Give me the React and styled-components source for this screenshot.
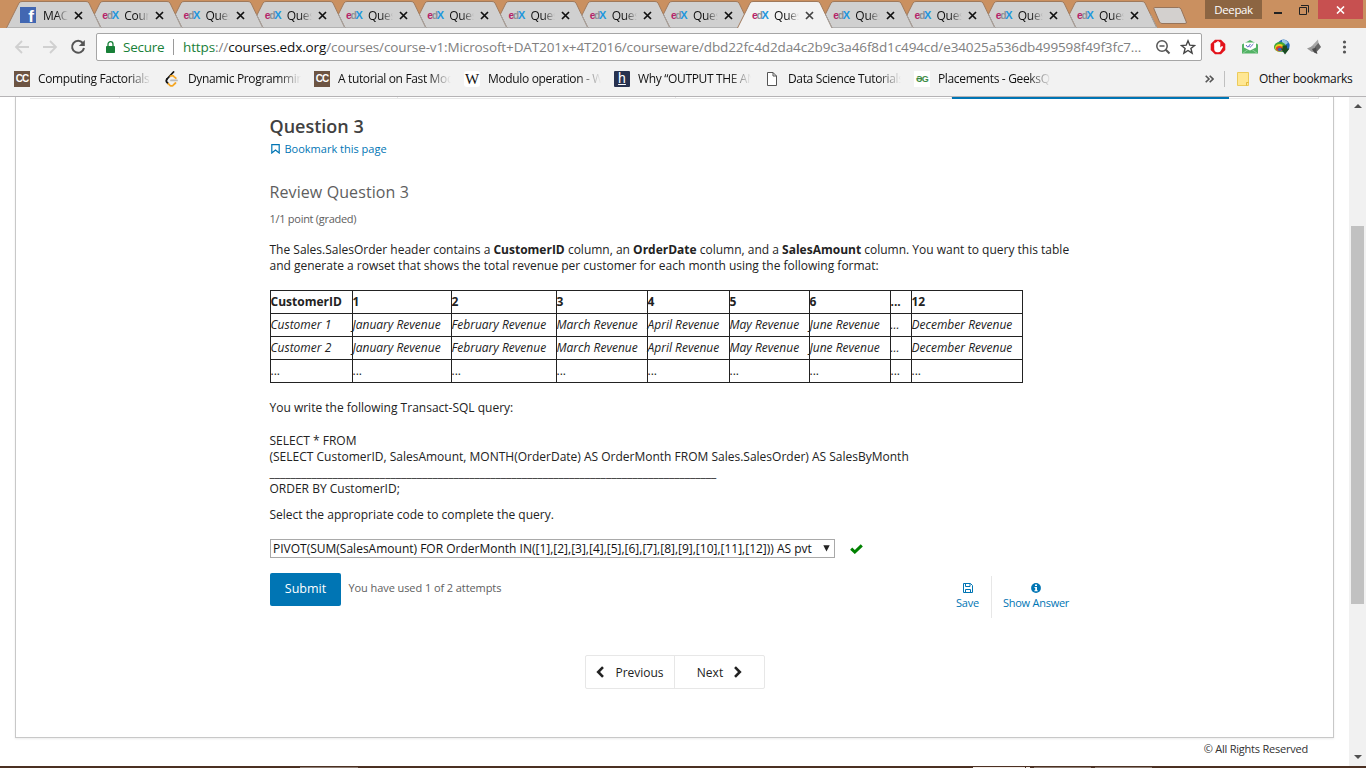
import React from "react";
import styled, { createGlobalStyle } from "styled-components";

const Global = createGlobalStyle`
  *, *::before, *::after { box-sizing: border-box; }
  body { margin: 0; overflow: hidden; background: #fff; }
  button { font: inherit; padding: 0; margin: 0; border: 0; background: none; }
  svg { display: block; flex: none; }
`;

const Window = styled.div`
  width: 1366px;
  height: 768px;
  display: flex;
  flex-direction: column;
  overflow: hidden;
  font-family: "Open Sans", "Noto Sans", sans-serif;
  color: #222;
`;

/* ---------- title bar and tabs ---------- */

const TitleBar = styled.header`
  height: 28px;
  flex: none;
  display: flex;
  align-items: flex-start;
  background: #ca9060;
  padding-left: 6px;
`;

const TabStrip = styled.div`
  display: flex;
  height: 28px;
  flex: none;
`;

const TabBox = styled.div`
  position: relative;
  z-index: ${(p) => p.$z};
  width: 81.24px;
  height: 28px;
  flex: none;
  display: flex;
  align-items: center;
  padding: 2px 0 0 15px;
`;

const TabShape = styled.svg`
  position: absolute;
  left: 0;
  top: 0;
`;

const TabLabel = styled.span`
  position: relative;
  width: 26px;
  margin: 1px 5px 0 6px;
  overflow: hidden;
  white-space: nowrap;
  font-size: 12px;
  line-height: 16px;
  letter-spacing: -0.3px;
  color: #111;
  mask-image: linear-gradient(90deg, #000 50%, transparent 96%);
`;

const TabClose = styled.svg`
  position: relative;
`;

const EdxMark = styled.span`
  position: relative;
  width: 16px;
  height: 16px;
  flex: none;
  font: bold 10.5px/16px "Liberation Sans", sans-serif;
  letter-spacing: -1.4px;
  white-space: nowrap;
  color: #b5236a;
  i { font-style: normal; color: #8d9296; }
  b { color: #1f97dd; font-size: 11px; }
`;

const FbMark = styled.span`
  position: relative;
  width: 16px;
  height: 16px;
  margin-left: -1px;
  margin-right: 1px;
  flex: none;
  overflow: hidden;
  background: #4267b2;
  color: #fff;
  font: bold 17px/19px "Liberation Sans", sans-serif;
  text-align: right;
  padding-right: 2px;
`;

const NewTab = styled.svg`
  margin-left: -3px;
`;

const UserBadge = styled.div`
  width: 57px;
  height: 19px;
  background: #8c6542;
  color: #fff;
  font-size: 11.5px;
  line-height: 19px;
  letter-spacing: -0.4px;
  text-align: center;
`;

const WindowButton = styled.div`
  width: ${(p) => p.$w}px;
  height: 19px;
  display: flex;
  align-items: center;
  justify-content: center;
  background: ${(p) => (p.$close ? "#c75050" : "transparent")};
`;

const WindowControls = styled.div`
  margin-left: auto;
  display: flex;
  padding-right: 3px;
`;

/* ---------- toolbar ---------- */

const Toolbar = styled.div`
  height: 38px;
  flex: none;
  display: flex;
  align-items: center;
  background: #f2f2f2;
  padding-left: 14px;
`;

const NavIcons = styled.div`
  display: flex;
  width: 82px;
  gap: 12px;
`;

const Omnibox = styled.div`
  width: 1106px;
  height: 28px;
  display: flex;
  align-items: center;
  background: #fff;
  border: 1px solid #a6a6a6;
  border-radius: 2px;
  padding-left: 9px;
  font-size: 13.5px;
  line-height: 20px;
  white-space: nowrap;
`;

const Secure = styled.span`
  margin-left: 8px;
  width: 41px;
  color: #188038;
  letter-spacing: -0.25px;
`;

const Rule = styled.span`
  width: 1px;
  height: 16px;
  flex: none;
  background: ${(p) => p.$c || "#9a9a9a"};
  margin: ${(p) => p.$m || "0"};
`;

const Url = styled.span`
  width: 972px;
  flex: none;
  color: #808080;
  letter-spacing: -0.115px;
  i { font-style: normal; color: #188038; }
  b { font-weight: 400; color: #111; }
`;

const Extensions = styled.div`
  display: flex;
  align-items: center;
  gap: 16px;
  margin-left: 8px;
`;

/* ---------- bookmarks ---------- */

const BookmarkBar = styled.div`
  height: 31px;
  flex: none;
  display: flex;
  align-items: center;
  background: #f2f2f2;
  border-bottom: 1px solid #b6b4b6;
  padding: 0 0 4px 14px;
  font-size: 12px;
  line-height: 18px;
  letter-spacing: -0.35px;
  color: #111;
`;

const Bookmark = styled.div`
  width: 150px;
  flex: none;
  display: flex;
  align-items: center;
  gap: 8px;
`;

const BookmarkLabel = styled.span`
  width: 113px;
  overflow: hidden;
  white-space: nowrap;
  mask-image: linear-gradient(90deg, #000 80%, transparent 100%);
`;

const LetterMark = styled.span`
  width: 16px;
  height: 16px;
  flex: none;
  overflow: hidden;
  text-align: center;
  background: ${(p) => p.$bg};
  color: ${(p) => p.$fg};
  border-radius: ${(p) => p.$r || 0}px;
  font: ${(p) => p.$font};
  letter-spacing: ${(p) => p.$ls || 0}px;
  text-decoration: ${(p) => p.$deco || "none"};
`;

const Chevrons = styled.span`
  margin-left: 141px;
  width: 20px;
  display: flex;
`;

const OtherLabel = styled.span`
  margin-left: 10px;
  white-space: nowrap;
`;

/* ---------- page ---------- */

const Viewport = styled.div`
  flex: 1;
  display: flex;
  min-height: 0;
`;

const Page = styled.main`
  width: 1349px;
  padding-left: 15px;
`;

const Card = styled.section`
  width: 1319px;
  height: 641px;
  border: 1px solid #c8c8c8;
  border-top: 0;
  box-shadow: 0 1px 2px rgba(0, 0, 0, 0.08);
`;

const SequenceStrip = styled.div`
  margin: 0 14px;
  height: 2px;
  display: flex;
`;

const SequenceItem = styled.span`
  width: ${(p) => p.$w}px;
  height: 2px;
  background: ${(p) => (p.$active ? "#0075b4" : "transparent")};
  border-bottom: ${(p) => (p.$active ? 0 : 1)}px solid #e7e7e7;
  border-right: ${(p) => (p.$active ? 0 : 1)}px solid #e7e7e7;
`;

const Column = styled.div`
  width: 800px;
  margin-left: 253.5px;
  padding-top: 16px;
`;

const Heading = styled.h2`
  margin: 0;
  font-size: 18px;
  font-weight: 600;
  line-height: 22px;
  color: #414141;
`;

const BookmarkLink = styled.div`
  display: flex;
  align-items: center;
  gap: 5px;
  height: 16px;
  margin-top: 4px;
  padding-left: 1px;
  font-size: 11px;
  line-height: 16px;
  color: #0075b4;
`;

const ProblemTitle = styled.h3`
  margin: 24px 0 0;
  font-size: 16px;
  font-weight: 400;
  line-height: 22px;
  letter-spacing: 0.1px;
  color: #5e5e5e;
`;

const Points = styled.div`
  margin-top: 8px;
  font-size: 11px;
  line-height: 16px;
  letter-spacing: -0.28px;
  color: #5e5e5e;
`;

const Text = styled.div`
  margin-top: ${(p) => p.$mt}px;
  font-size: 12px;
  line-height: 16px;
  white-space: nowrap;
  color: #222;
`;

const Line = styled.div`
  height: 16px;
`;

const Table = styled.table`
  margin: 16px 0 0 0.5px;
  width: 753px;
  table-layout: fixed;
  border-collapse: separate;
  border-spacing: 0;
  border-left: 1px solid #222;
  border-top: 1px solid #222;
  font-size: 12px;
  line-height: 16px;
  color: #222;
`;

const Cell = styled.td`
  height: 23px;
  padding: 0;
  border-right: 1px solid #222;
  border-bottom: 1px solid #222;
  white-space: nowrap;
  text-indent: -0.5px;
  font-weight: ${(p) => (p.$head ? 700 : 400)};
  font-style: ${(p) => (p.$italic ? "italic" : "normal")};
`;

const AnswerRow = styled.div`
  display: flex;
  align-items: center;
  gap: 15px;
  margin: 16px 0 0 0.5px;
  height: 19px;
`;

const SelectBox = styled.div`
  width: 565px;
  height: 19px;
  display: flex;
  align-items: center;
  justify-content: space-between;
  padding: 0 4px 0 2px;
  border: 1px solid #a9a9a9;
  background: #fff;
  font-size: 12px;
  line-height: 16px;
  white-space: nowrap;
  color: #111;
`;

const ActionRow = styled.div`
  display: flex;
  margin: 15px 0 0 0.5px;
  height: 46px;
`;

const SubmitButton = styled.button`
  width: 71px;
  height: 33px;
  border-radius: 2px;
  background: #0075b4;
  color: #fff;
  font-size: 12.5px;
  line-height: 18px;
  padding-bottom: 1px;
`;

const Attempts = styled.span`
  margin-left: 7.5px;
  margin-top: 7px;
  font-size: 11px;
  line-height: 16px;
  height: 16px;
  letter-spacing: -0.08px;
  color: #5e5e5e;
`;

const Actions = styled.div`
  display: flex;
  margin: 3px 0 0 auto;
`;

const Action = styled.button`
  width: ${(p) => p.$w}px;
  height: 42px;
  display: flex;
  flex-direction: column;
  align-items: center;
  padding-top: 7px;
  padding-left: ${(p) => (p.$divider ? 11 : 0)}px;
  gap: 2px;
  border-left: ${(p) => (p.$divider ? "1px solid #e7e7e7" : 0)};
  font-size: 11px;
  line-height: 16px;
  letter-spacing: -0.25px;
  white-space: nowrap;
  color: #0075b4;
`;

const Pager = styled.nav`
  width: 180px;
  height: 34px;
  margin: 36px 0 0 315.5px;
  display: flex;
  border: 1px solid #e7e7e7;
  border-radius: 2px;
  font-size: 12px;
`;

const PagerButton = styled.button`
  width: ${(p) => (p.$divider ? 90 : 88)}px;
  display: flex;
  align-items: center;
  justify-content: center;
  gap: 10px;
  color: #222;
  border-left: ${(p) => (p.$divider ? "1px solid #e7e7e7" : 0)};
`;

const Footer = styled.footer`
  padding: 3px 41px 0 0;
  text-align: right;
  font-size: 11px;
  line-height: 16px;
  letter-spacing: -0.22px;
  color: #313131;
`;

const Scrollbar = styled.div`
  width: 17px;
  display: flex;
  flex-direction: column;
  align-items: center;
  background: #f1f1f1;
  padding: 7px 0;
`;

const Thumb = styled.div`
  width: 13px;
  height: 378px;
  margin: 118px 0 auto;
  background: #c1c1c1;
`;

const Taskbar = styled.div`
  height: 2px;
  flex: none;
  display: flex;
  align-items: flex-end;
  background: #4b3022;
`;

const TaskItem = styled.span`
  width: ${(p) => p.$w}px;
  margin-left: ${(p) => p.$gap}px;
  height: 1px;
  flex: none;
  background: ${(p) => (p.$bright ? "#f3ece8" : "#8e7d74")};
`;

/* ---------- data ---------- */

const tabs = [
  { kind: "fb", label: "MACH" },
  { label: "Cours" },
  ...Array.from({ length: 12 }, (_, i) => ({ label: "Ques", active: i === 7 })),
];

const columns = [82, 99, 105, 91, 82, 80, 81, 21, 111];
const months = ["January Revenue", "February Revenue", "March Revenue", "April Revenue", "May Revenue", "June Revenue", "...", "December Revenue"];
const rows = [
  { head: true, cells: ["CustomerID", "1", "2", "3", "4", "5", "6", "...", "12"] },
  { italic: true, cells: ["Customer 1", ...months] },
  { italic: true, cells: ["Customer 2", ...months] },
  { cells: Array(9).fill("...") },
];

/* ---------- pieces ---------- */

function Tab({ kind, label, active, z }) {
  const fill = active ? "#f2f2f2" : "#d0d0d0";
  return (
    <TabBox $z={z}>
      <TabShape width="97" height="28" viewBox="0 0 97 28">
        <path d="M0.5 28 L13 3 Q14 1.5 16 1.5 H80 Q82 1.5 83 3 L95 28 Z" fill={fill} />
        <path d="M0.5 28 L13 3 Q14 1.5 16 1.5 H80 Q82 1.5 83 3 L95 28" fill="none" stroke="#a07a5c" />
        <path d="M88.5 14.5 L95 28" stroke="#a3a3a3" />
        {!active && <path d="M1 27.5 H95" stroke="#b2b2b2" />}
      </TabShape>
      {kind === "fb" ? <FbMark>f</FbMark> : <EdxMark>e<i>d</i><b>X</b></EdxMark>}
      <TabLabel>{label}</TabLabel>
      <TabClose width="9" height="9" viewBox="0 0 9 9">
        <path d="M1 1 L8 8 M8 1 L1 8" stroke={active ? "#444" : "#111"} strokeWidth="1.7" />
      </TabClose>
    </TabBox>
  );
}

const CcMark = () => (
  <LetterMark $bg="#6d5443" $fg="#fff" $font='bold 10px/15px "Liberation Sans", sans-serif' $ls={-0.9}>CC</LetterMark>
);

const bookmarks = [
  { icon: <CcMark />, label: "Computing Factorials" },
  {
    icon: (
      <svg width="16" height="16" viewBox="0 0 16 16" fill="none" strokeWidth="1.8" strokeLinecap="round">
        <path d="M9.5 1 L3 8" stroke="#111" />
        <path d="M3 8 Q1.6 9.8 3 11.4 L4 12.4" stroke="#111" />
        <path d="M4.4 12.8 L6 14.4 Q7.5 15.4 9 14.4 L11.5 12" stroke="#f5a623" />
        <path d="M6.4 5.2 Q8.5 4 10 5.6 L11.8 7.2" stroke="#f5a623" />
        <path d="M7 9.4 H13" stroke="#b8b8b8" />
      </svg>
    ),
    label: "Dynamic Programming",
  },
  { icon: <CcMark />, label: "A tutorial on Fast Mod" },
  { icon: <LetterMark $bg="#fff" $fg="#111" $r={3} $font='15px/17px "Liberation Serif", serif'>W</LetterMark>, label: "Modulo operation - W" },
  { icon: <LetterMark $bg="#27314f" $fg="#fff" $r={1} $deco="underline" $font='14px/15px "Liberation Sans", sans-serif'>h</LetterMark>, label: "Why “OUTPUT THE AN" },
  {
    icon: (
      <svg width="16" height="16" viewBox="0 0 16 16" fill="#fff" stroke="#555">
        <path d="M3.5 1.5 H9 L12.5 5 V14.5 H3.5 Z M9 1.5 V5 H12.5" />
      </svg>
    ),
    label: "Data Science Tutorials",
  },
  { icon: <LetterMark $bg="#fff" $fg="#3c8c45" $font='bold 9px/16px "Liberation Sans", sans-serif' $ls={-0.8}>ƏG</LetterMark>, label: "Placements - GeeksQ" },
];

const Chevron = ({ d }) => (
  <svg width="9" height="12" viewBox="0 0 9 12" fill="none" stroke="#222" strokeWidth="2.6">
    <path d={d} />
  </svg>
);

export default function App() {
  return (
    <Window>
      <Global />
      <TitleBar>
        <TabStrip>
          {tabs.map((t, i) => (
            <Tab key={i} {...t} z={t.active ? 20 : 15 - i} />
          ))}
        </TabStrip>
        <NewTab width="50" height="28" viewBox="0 0 50 28">
          <path d="M14.5 7.5 Q13.5 7.5 14 9 L19.5 22 Q20.5 23.5 22 23.5 H45 Q47 23.5 46.3 22 L41 9 Q40.3 7.5 38.5 7.5 Z" fill="#d3d0ce" stroke="#97745a" />
        </NewTab>
        <WindowControls>
          <UserBadge>Deepak</UserBadge>
          <WindowButton $w={31}>
            <svg width="8" height="8"><path d="M0 7 H8" stroke="#222" strokeWidth="2" /></svg>
          </WindowButton>
          <WindowButton $w={21}>
            <svg width="10" height="10" fill="none" stroke="#222">
              <path d="M0.5 2.5 H7.5 V9.5 H0.5 Z M2 0.5 H9.5 V7.5" />
            </svg>
          </WindowButton>
          <WindowButton $w={4} />
          <WindowButton $w={45} $close>
            <svg width="9" height="8"><path d="M1 0.5 L8 7.5 M8 0.5 L1 7.5" stroke="#fff" strokeWidth="1.6" /></svg>
          </WindowButton>
        </WindowControls>
      </TitleBar>

      <Toolbar>
        <NavIcons>
          <svg width="16" height="16" fill="none" stroke="#d0d0d0" strokeWidth="1.8"><path d="M15 8 H2 M8 2 L2 8 L8 14" /></svg>
          <svg width="16" height="16" fill="none" stroke="#d0d0d0" strokeWidth="1.8"><path d="M1 8 H14 M8 2 L14 8 L8 14" /></svg>
          <svg width="16" height="16" fill="none" stroke="#555" strokeWidth="2">
            <path d="M12.8 4 A6 6 0 1 0 14 9" />
            <path d="M14.8 1 V7 H8.8 Z" fill="#555" stroke="none" />
          </svg>
        </NavIcons>
        <Omnibox>
          <svg width="9" height="12" viewBox="0 0 9 12">
            <rect x="0" y="5" width="9" height="7" rx="0.8" fill="#188038" />
            <path d="M2 5.5 V3.2 a2.5 2.5 0 0 1 5 0 V5.5" fill="none" stroke="#188038" strokeWidth="1.3" />
          </svg>
          <Secure>Secure</Secure>
          <Rule $m="0 9px 0 9px" />
          <Url>
            <i>https</i>://<b>courses.edx.org</b>/courses/course-v1:Microsoft+DAT201x+4T2016/courseware/dbd22fc4d2da4c2b9c3a46f8d1c494cd/e34025a536db499598f49f3fc7...
          </Url>
          <svg width="16" height="16" fill="none" stroke="#555" strokeWidth="1.5">
            <circle cx="7" cy="7" r="5.2" /><path d="M4.5 7 H9.5" /><path d="M10.8 10.8 L14.5 14.5" strokeWidth="2" />
          </svg>
          <svg width="16" height="16" viewBox="0 0 16 16" fill="none" stroke="#444" strokeWidth="1.4" style={{ marginLeft: 9 }}>
            <path d="M8 1.8 L9.8 6.2 L14.5 6.5 L10.9 9.5 L12.1 14.1 L8 11.5 L3.9 14.1 L5.1 9.5 L1.5 6.5 L6.2 6.2 Z" />
          </svg>
        </Omnibox>
        <Extensions>
          <svg width="16" height="16" viewBox="0 0 16 16">
            <path d="M5 0.7 H11 L15.3 5 V11 L11 15.3 H5 L0.7 11 V5 Z" fill="#e3131b" />
            <path d="M4.2 8 V4.5 a.7.7 0 0 1 1.5 0 V3.4 a.8.8 0 0 1 1.5 0 V2.8 a.8.8 0 0 1 1.6 0 V3.6 a.8.8 0 0 1 1.5 0 V8.5 L11.6 7.2 a.9.9 0 0 1 1.3 1 L10.5 12.2 Q9.8 13.3 8.3 13.3 H7.2 Q4.2 13 4.2 10 Z" fill="#fff" />
          </svg>
          <svg width="16" height="16" viewBox="0 0 16 16">
            <path d="M0 5.5 L8 1 L16 5.5 V14.5 H0 Z" fill="#52b265" />
            <path d="M2 3.5 H14 V8.5 L8 11.5 L2 8.5 Z" fill="#fff" />
            <path d="M4 6 L5.8 8.2 L8.5 5 M7.4 7.6 L8.2 8.2 L11.4 5" fill="none" stroke="#5b62c4" />
            <path d="M0.5 14.5 L6 10.5 M15.5 14.5 L10 10.5" stroke="#8ed09b" />
          </svg>
          <svg width="16" height="16" viewBox="0 0 16 16">
            <circle cx="9.5" cy="6.8" r="6.2" fill="#2369b8" />
            <path d="M8 1 Q12 0 14 4 L11 6 L8 4 Z" fill="#9bc9e8" />
            <ellipse cx="6" cy="8" rx="6" ry="5" fill="#3fa53a" />
            <ellipse cx="5.6" cy="8.8" rx="4.6" ry="3.8" fill="#e8d21d" />
            <ellipse cx="5.4" cy="9.6" rx="3.4" ry="2.6" fill="#d8402a" />
            <ellipse cx="5.8" cy="10.4" rx="2" ry="1.6" fill="#3a62b5" />
            <path d="M8.5 6.5 H13 V9.5 H15.5 L11 15.5 L6.8 9.5 H8.5 Z" fill="#1c4c22" />
          </svg>
          <svg width="16" height="16" viewBox="0 0 16 16">
            <path d="M12 0.5 L12.8 6 L9 11 L4 9 Z" fill="#a9a9a9" />
            <path d="M12.4 4 L15 8 L11 12.5 L8 9 Z" fill="#666" />
            <path d="M1 9.5 L8 6.5 L10 12 L6 13 Z" fill="#999" />
            <path d="M6 10 L10 8.5 L11.4 15 L8 13.5 Z" fill="#4b4b4b" />
          </svg>
          <svg width="16" height="16" viewBox="0 0 16 16" fill="#555" style={{ marginLeft: -1 }}>
            <circle cx="7.5" cy="3" r="1.6" /><circle cx="7.5" cy="8" r="1.6" /><circle cx="7.5" cy="13" r="1.6" />
          </svg>
        </Extensions>
      </Toolbar>

      <BookmarkBar>
        {bookmarks.map((b) => (
          <Bookmark key={b.label}>
            {b.icon}
            <BookmarkLabel>{b.label}</BookmarkLabel>
          </Bookmark>
        ))}
        <Chevrons>
          <svg width="9" height="8" fill="none" stroke="#555" strokeWidth="1.6"><path d="M0.7 0.7 L4 4 L0.7 7.3 M4.7 0.7 L8 4 L4.7 7.3" /></svg>
        </Chevrons>
        <Rule $c="#c0c0c0" $m="0 12px 0 -1px" />
        <svg width="12" height="14" viewBox="0 0 12 14"><path d="M0.5 0.5 H11.5 V13.5 H0.5 Z" fill="#ffe793" stroke="#eccb5b" /><path d="M9.5 13.5 V10.5 H11.5" fill="none" stroke="#e3b93d" /></svg>
        <OtherLabel>Other bookmarks</OtherLabel>
      </BookmarkBar>

      <Viewport>
        <Page>
          <Card>
            <SequenceStrip>
              <SequenceItem $w={90} />
              <SequenceItem $w={278} />
              <SequenceItem $w={278} />
              <SequenceItem $w={276} />
              <SequenceItem $w={277} $active />
              <SequenceItem $w={90} />
            </SequenceStrip>
            <Column>
              <Heading>Question 3</Heading>
              <BookmarkLink>
                <svg width="9" height="10" viewBox="0 0 9 10" fill="none" stroke="#0075b4" strokeWidth="1.2">
                  <path d="M0.8 0.7 H8.2 V9 L4.5 6 L0.8 9 Z" />
                </svg>
                Bookmark this page
              </BookmarkLink>
              <ProblemTitle>Review Question 3</ProblemTitle>
              <Points>1/1 point (graded)</Points>
              <Text $mt={15}>
                <Line>The Sales.SalesOrder header contains a <b>CustomerID</b> column, an <b>OrderDate</b> column, and a <b>SalesAmount</b> column. You want to query this table</Line>
                <Line>and generate a rowset that shows the total revenue per customer for each month using the following format:</Line>
              </Text>
              <Table>
                <colgroup>
                  {columns.map((w, i) => <col key={i} width={w} />)}
                </colgroup>
                <tbody>
                  {rows.map((r, i) => (
                    <tr key={i}>
                      {r.cells.map((c, j) => (
                        <Cell key={j} $head={r.head} $italic={r.italic}>{c}</Cell>
                      ))}
                    </tr>
                  ))}
                </tbody>
              </Table>
              <Text $mt={17}>
                <Line>You write the following Transact-SQL query:</Line>
              </Text>
              <Text $mt={17}>
                <Line>SELECT * FROM</Line>
                <Line>(SELECT CustomerID, SalesAmount, MONTH(OrderDate) AS OrderMonth FROM Sales.SalesOrder) AS SalesByMonth</Line>
                <Line>_____________________________________________________________________________________</Line>
                <Line>ORDER BY CustomerID;</Line>
              </Text>
              <Text $mt={10}>
                <Line>Select the appropriate code to complete the query.</Line>
              </Text>
              <AnswerRow>
                <SelectBox>
                  PIVOT(SUM(SalesAmount) FOR OrderMonth IN([1],[2],[3],[4],[5],[6],[7],[8],[9],[10],[11],[12])) AS pvt
                  <svg width="7" height="7"><path d="M0.3 0.3 H6.7 L3.5 6.5 Z" fill="#222" /></svg>
                </SelectBox>
                <svg width="13" height="10" viewBox="0 0 13 10" fill="none" stroke="#008100" strokeWidth="3">
                  <path d="M1.2 4.6 L4.8 8 L11.8 1.3" />
                </svg>
              </AnswerRow>
              <ActionRow>
                <SubmitButton>Submit</SubmitButton>
                <Attempts>You have used 1 of 2 attempts</Attempts>
                <Actions>
                  <Action $w={46}>
                    <svg width="10" height="10" viewBox="0 0 10 10" fill="none" stroke="#0075b4">
                      <path d="M0.5 0.5 H7.5 L9.5 2.5 V9.5 H0.5 Z M2.5 0.5 V3.5 H7 V0.5 M2.5 9.5 V6.5 H7.5 V9.5" />
                    </svg>
                    Save
                  </Action>
                  <Action $w={79} $divider>
                    <svg width="10" height="10" viewBox="0 0 10 10">
                      <circle cx="5" cy="5" r="4.9" fill="#0075b4" />
                      <path d="M4 1.6 H6 V3 H4 Z M3.5 4 H6 V7.2 H6.7 V8.2 H3.4 V7.2 H4.2 V5 H3.5 Z" fill="#fff" />
                    </svg>
                    Show Answer
                  </Action>
                </Actions>
              </ActionRow>
              <Pager>
                <PagerButton><Chevron d="M7 1.2 L2.2 6 L7 10.8" />Previous</PagerButton>
                <PagerButton $divider>Next<Chevron d="M2 1.2 L6.8 6 L2 10.8" /></PagerButton>
              </Pager>
            </Column>
          </Card>
          <Footer>© All Rights Reserved</Footer>
        </Page>
        <Scrollbar>
          <svg width="8" height="4"><path d="M0 4 L4 0 L8 4 Z" fill="#505050" /></svg>
          <Thumb />
          <svg width="8" height="4"><path d="M0 0 H8 L4 4 Z" fill="#505050" /></svg>
        </Scrollbar>
      </Viewport>
      <Taskbar>
        <TaskItem $w={58} $gap={300} />
        <TaskItem $w={52} $gap={615} $bright />
        <TaskItem $w={4} $gap={1} $bright />
        <TaskItem $w={57} $gap={4} />
        <TaskItem $w={57} $gap={4} />
      </Taskbar>
    </Window>
  );
}
